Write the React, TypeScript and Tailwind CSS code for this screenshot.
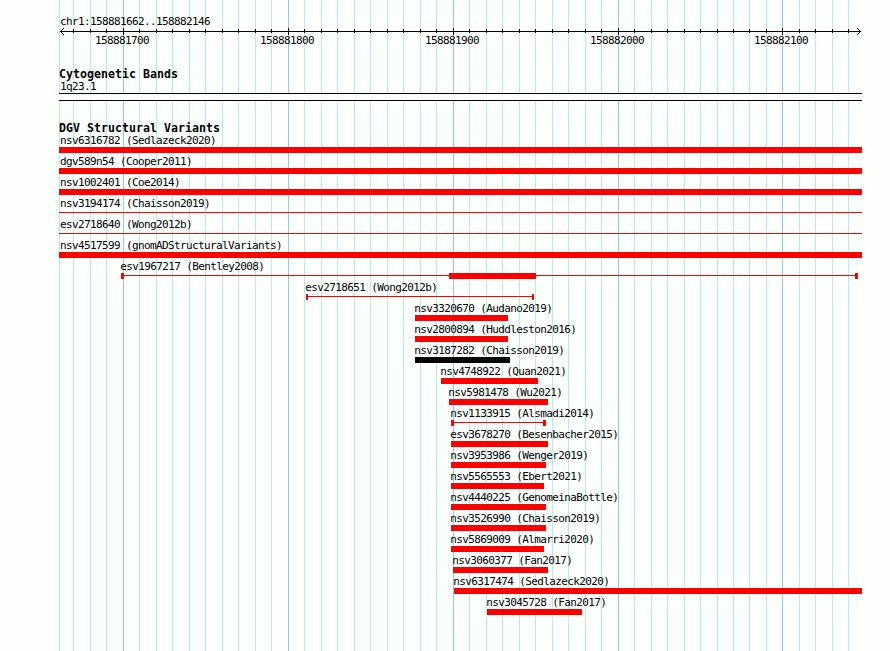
import React from "react";

interface Variant {
  name: string;
  start: number;
  end: number;
  shape?: "bar" | "line" | "range";
  color?: string;
  cap?: number;
  core?: [number, number];
}

const LEFT = 59;
const RIGHT = 862;

const gridLines = [
  59, 73, 90, 106, 123, 139, 156, 172, 189, 205, 222, 238, 255, 271, 288, 304, 321, 337, 354, 370, 387, 403, 420,
  436, 453, 469, 486, 502, 519, 535, 552, 568, 585, 601, 618, 634, 651, 667, 684, 700, 717, 733, 749, 766, 782, 799,
  815, 832, 848,
];

const majorTicks = [
  { x: 123, label: "158881700" },
  { x: 288, label: "158881800" },
  { x: 453, label: "158881900" },
  { x: 618, label: "158882000" },
  { x: 782, label: "158882100" },
];

const variants: Variant[] = [
  { name: "nsv6316782 (Sedlazeck2020)", start: 59, end: 862 },
  { name: "dgv589n54 (Cooper2011)", start: 59, end: 862 },
  { name: "nsv1002401 (Coe2014)", start: 59, end: 862 },
  { name: "nsv3194174 (Chaisson2019)", start: 59, end: 862, shape: "line" },
  { name: "esv2718640 (Wong2012b)", start: 59, end: 862, shape: "line" },
  { name: "nsv4517599 (gnomADStructuralVariants)", start: 59, end: 862 },
  { name: "esv1967217 (Bentley2008)", start: 121, end: 858, shape: "range", cap: 3, core: [449, 536] },
  { name: "esv2718651 (Wong2012b)", start: 306, end: 534, shape: "range", cap: 2 },
  { name: "nsv3320670 (Audano2019)", start: 415, end: 508 },
  { name: "nsv2800894 (Huddleston2016)", start: 415, end: 508 },
  { name: "nsv3187282 (Chaisson2019)", start: 415, end: 510, color: "#000000" },
  { name: "nsv4748922 (Quan2021)", start: 441, end: 538 },
  { name: "nsv5981478 (Wu2021)", start: 449, end: 548 },
  { name: "nsv1133915 (Alsmadi2014)", start: 451, end: 546, shape: "range", cap: 3 },
  { name: "esv3678270 (Besenbacher2015)", start: 451, end: 548 },
  { name: "nsv3953986 (Wenger2019)", start: 451, end: 546 },
  { name: "nsv5565553 (Ebert2021)", start: 451, end: 544 },
  { name: "nsv4440225 (GenomeinaBottle)", start: 451, end: 546 },
  { name: "nsv3526990 (Chaisson2019)", start: 451, end: 546 },
  { name: "nsv5869009 (Almarri2020)", start: 451, end: 544 },
  { name: "nsv3060377 (Fan2017)", start: 453, end: 548 },
  { name: "nsv6317474 (Sedlazeck2020)", start: 454, end: 862 },
  { name: "nsv3045728 (Fan2017)", start: 487, end: 582 },
];

const labelClass = "block whitespace-pre text-[11px] leading-[12px] tracking-[-0.622px]";
const headingClass = "-mt-px mb-px block whitespace-pre text-[11.6px] leading-[12px] font-bold tracking-[0.016px]";

const Grid: React.FC = () => (
  <svg className="absolute inset-0" width="890" height="651" shapeRendering="crispEdges">
    {gridLines.map((x) => (
      <rect
        key={x}
        x={x}
        y="0"
        width="1"
        height="651"
        fill={majorTicks.some((t) => t.x === x) ? "#87ceeb" : "#afeeee"}
      />
    ))}
  </svg>
);

const Axis: React.FC = () => (
  <svg className="block" width="890" height="9" shapeRendering="crispEdges">
    <rect x="60" y="4" width="801" height="1" />
    {gridLines.slice(1).map((x) =>
      majorTicks.some((t) => t.x === x) ? (
        <rect key={x} x={x} y="1" width="1" height="7" />
      ) : (
        <rect key={x} x={x} y="2" width="1" height="4" />
      )
    )}
    {/* Arrow heads */}
    {[1, 2, 3].map((d) => (
      <React.Fragment key={d}>
        <rect x={60 + d} y={4 - d} width="1" height="1" />
        <rect x={60 + d} y={4 + d} width="1" height="1" />
        <rect x={860 - d} y={4 - d} width="1" height="1" />
        <rect x={860 - d} y={4 + d} width="1" height="1" />
      </React.Fragment>
    ))}
  </svg>
);

const Glyph: React.FC<{ variant: Variant }> = ({ variant }) => {
  const { start, end, shape = "bar", color = "#ff0000", cap = 0, core } = variant;
  const width = end - start;

  return (
    <svg className="block" style={{ marginLeft: start }} width={width} height="6" fill={color} shapeRendering="crispEdges">
      {shape === "bar" ? <rect width={width} height="6" /> : <rect y="2" width={width} height="1" />}
      {shape === "range" && (
        <>
          <rect width={cap} height="6" />
          <rect x={width - cap} width={cap} height="6" />
        </>
      )}
      {core && <rect x={core[0] - start} width={core[1] - core[0]} height="6" />}
    </svg>
  );
};

const VariantRow: React.FC<{ variant: Variant }> = ({ variant }) => (
  <div className="h-[21px]">
    <span className={labelClass} style={{ paddingLeft: variant.start === LEFT ? 60 : variant.start - 0.7 }}>
      {variant.name}
    </span>
    <Glyph variant={variant} />
  </div>
);

export default function App() {
  return (
    <main className="relative h-[651px] w-[890px] overflow-hidden bg-[#fdfffc] font-['DejaVu_Sans_Mono',monospace] text-black">
      <Grid />

      <div className="relative pt-[16px]">
        <span className={`${labelClass} h-[11px] pl-[60px]`}>chr1:158881662..158882146</span>
        <Axis />
        <div className="flex h-[33px] pl-[95px]">
          {majorTicks.map((tick) => (
            <span key={tick.x} className={`${labelClass} ${tick.x === 618 ? "w-[164px]" : "w-[165px]"} shrink-0 -mt-[1px]`}>
              {tick.label}
            </span>
          ))}
        </div>

        <section className="flex h-[54px] flex-col">
          <h2 className={`${headingClass} pl-[59px]`}>Cytogenetic Bands</h2>
          <span className={`${labelClass} pl-[60px]`}>1q23.1</span>
          <div className="ml-[59px] h-[8px] border-y border-black bg-white" style={{ width: RIGHT - LEFT }} />
        </section>

        <section className="flex flex-col">
          <h2 className={`${headingClass} pl-[59px]`}>DGV Structural Variants</h2>
          {variants.map((variant) => (
            <VariantRow key={variant.name} variant={variant} />
          ))}
        </section>
      </div>
    </main>
  );
}
